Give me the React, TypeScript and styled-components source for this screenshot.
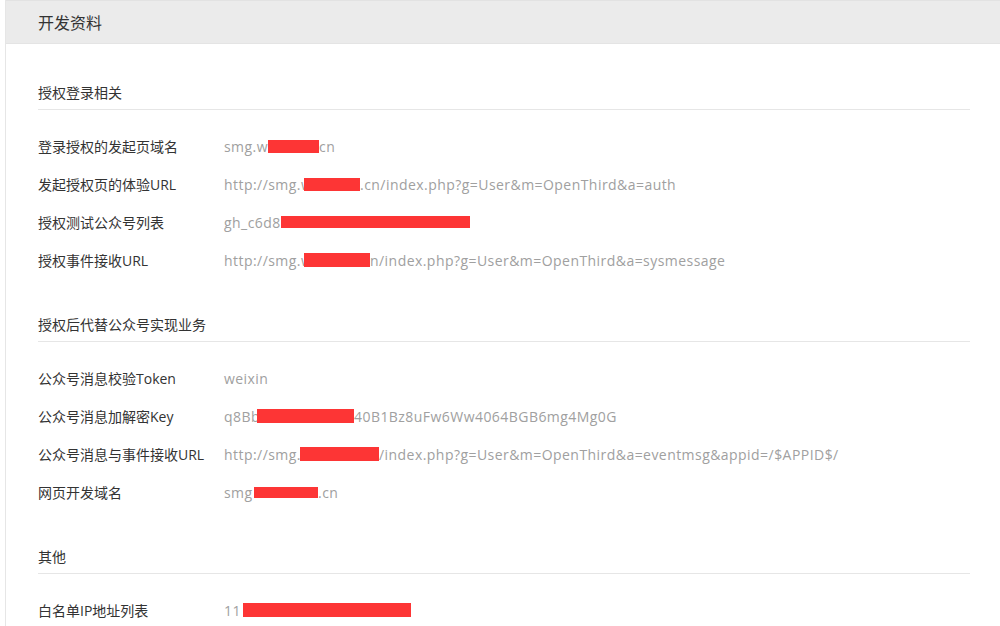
import React from 'react';
import styled, { createGlobalStyle } from 'styled-components';

const GlobalStyle = createGlobalStyle`
  html, body {
    margin: 0;
    padding: 0;
    background: #ffffff;
  }
  body {
    font-family: "Open Sans", "Noto Sans CJK SC", sans-serif;
    font-size: 14px;
    color: #333333;
  }
`;

const Page = styled.div`
  margin-left: 5px;
  min-height: 626px;
  border-left: 1px solid #e6e6e6;
  box-sizing: border-box;
`;

const Header = styled.div`
  height: 44px;
  box-sizing: border-box;
  display: flex;
  align-items: center;
  padding-left: 32px;
  background: #ebebeb;
  border-top: 1px solid #e2e2e2;
  border-bottom: 1px solid #e4e4e4;
  font-size: 16px;
  color: #333333;
`;

const Content = styled.div`
  padding: 39px 30px 0 32px;
  display: flex;
  flex-direction: column;
  gap: 36px;
`;

const Section = styled.section`
  display: flex;
  flex-direction: column;
`;

const SectionTitle = styled.h3`
  margin: 0;
  font-size: 14px;
  font-weight: normal;
  line-height: 20px;
  padding-bottom: 6px;
  border-bottom: 1px solid #e6e6e6;
  color: #333333;
`;

const Rows = styled.div`
  padding-top: 17px;
  display: flex;
  flex-direction: column;
`;

const Row = styled.div`
  height: 38px;
  display: flex;
  align-items: center;
`;

const Label = styled.div`
  width: 186px;
  flex-shrink: 0;
  color: #333333;
  white-space: nowrap;
`;

const Value = styled.div`
  display: flex;
  align-items: center;
  color: #a0a0a0;
  white-space: pre;
  letter-spacing: 0.45px;
`;

const Prefix = styled.span<{ $w: number }>`
  display: inline-block;
  width: ${p => p.$w}px;
  overflow: visible;
`;

const Redact = styled.span<{ $w: number; $h: number }>`
  display: inline-block;
  position: relative;
  width: ${p => p.$w}px;
  height: ${p => p.$h}px;
  background: #fd3535;
`;

interface RowData {
  label: string;
  // visible text, the width it takes before the masked part, the mask and the tail
  value: string;
  prefixW?: number;
  mask?: { w: number; h: number };
  tail?: string;
}

interface SectionData {
  title: string;
  rows: RowData[];
}

const sections: SectionData[] = [
  {
    title: '授权登录相关',
    rows: [
      { label: '登录授权的发起页域名', value: 'smg.w', prefixW: 44, mask: { w: 51, h: 13 }, tail: 'cn' },
      { label: '发起授权页的体验URL', value: 'http://smg.w', prefixW: 80, mask: { w: 56, h: 13 }, tail: '.cn/index.php?g=User&m=OpenThird&a=auth' },
      { label: '授权测试公众号列表', value: 'gh_c6d8', prefixW: 57, mask: { w: 189, h: 12 } },
      { label: '授权事件接收URL', value: 'http://smg.w', prefixW: 80, mask: { w: 66, h: 14 }, tail: 'n/index.php?g=User&m=OpenThird&a=sysmessage' },
    ],
  },
  {
    title: '授权后代替公众号实现业务',
    rows: [
      { label: '公众号消息校验Token', value: 'weixin' },
      { label: '公众号消息加解密Key', value: 'q8Bb', prefixW: 33, mask: { w: 97, h: 14 }, tail: '40B1Bz8uFw6Ww4064BGB6mg4Mg0G' },
      { label: '公众号消息与事件接收URL', value: 'http://smg.', prefixW: 76, mask: { w: 79, h: 14 }, tail: '/index.php?g=User&m=OpenThird&a=eventmsg&appid=/$APPID$/' },
      { label: '网页开发域名', value: 'smg', prefixW: 30, mask: { w: 64, h: 11 }, tail: '.cn' },
    ],
  },
  {
    title: '其他',
    rows: [{ label: '白名单IP地址列表', value: '11', prefixW: 19, mask: { w: 168, h: 14 } }],
  },
];

export default function App() {
  return (
    <>
      <GlobalStyle />
      <Page>
        <Header>开发资料</Header>
        <Content>
          {sections.map(section => (
            <Section key={section.title}>
              <SectionTitle>{section.title}</SectionTitle>
              <Rows>
                {section.rows.map(row => (
                  <Row key={row.label}>
                    <Label>{row.label}</Label>
                    <Value>
                      {row.mask ? (
                        <>
                          <Prefix $w={row.prefixW ?? 0}>{row.value}</Prefix>
                          <Redact $w={row.mask.w} $h={row.mask.h} />
                          {row.tail && <span>{row.tail}</span>}
                        </>
                      ) : (
                        <span>{row.value}</span>
                      )}
                    </Value>
                  </Row>
                ))}
              </Rows>
            </Section>
          ))}
        </Content>
      </Page>
    </>
  );
}
